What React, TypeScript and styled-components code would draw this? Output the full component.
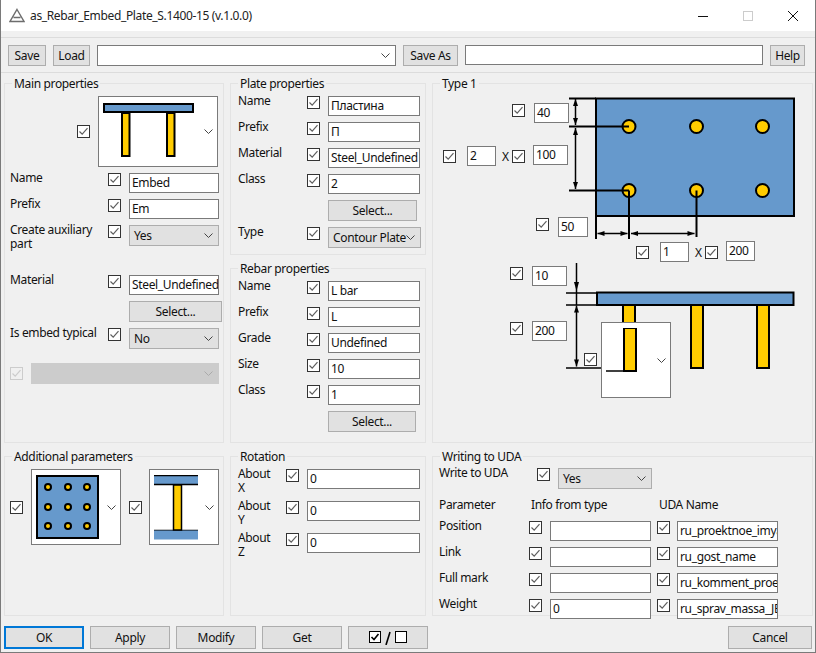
import React from 'react';
import styled, { createGlobalStyle } from 'styled-components';

const GlobalStyle = createGlobalStyle`
  html, body {
    margin: 0;
    padding: 0;
    background: #f0f0f0;
  }
  * {
    box-sizing: border-box;
  }
`;

const Win = styled.div`
  width: 816px;
  height: 653px;
  display: flex;
  flex-direction: column;
  background: #f0f0f0;
  border: 1px solid #7a7a7a;
  border-top: 0;
  font-family: 'Noto Sans', 'Open Sans', sans-serif;
  font-size: 12px;
  color: #000;
  overflow: hidden;
`;

const TitleBar = styled.div`
  height: 31px;
  flex: none;
  display: flex;
  align-items: center;
  background: #fff;
  padding-left: 8px;
`;

const TitleText = styled.span`
  margin-left: 5px;
  letter-spacing: -0.35px;
  color: #222;
`;

const TitleButtons = styled.div`
  margin-left: auto;
  display: flex;
`;

const TitleBtn = styled.div`
  width: 45px;
  height: 31px;
  display: flex;
  align-items: center;
  justify-content: center;
`;

const Toolbar = styled.div`
  height: 36px;
  margin-top: 6px;
  flex: none;
  display: flex;
  align-items: center;
  gap: 7px;
  padding: 0 9px 0 7px;
  border-top: 1px solid #dcdcdc;
  border-bottom: 1px solid #dcdcdc;
`;

const Btn = styled.button<{ $w?: number; $h?: number; $default?: boolean }>`
  width: ${(p) => (p.$w ? `${p.$w}px` : 'auto')};
  height: ${(p) => p.$h ?? 21}px;
  flex: none;
  padding: 0;
  font: inherit;
  letter-spacing: -0.35px;
  color: #111;
  background: #e1e1e1;
  border: ${(p) => (p.$default ? '2px solid #0078d7' : '1px solid #adadad')};
  display: flex;
  align-items: center;
  justify-content: center;
  gap: 5px;
`;

const Field = styled.div<{ $w?: number; $grow?: boolean }>`
  width: ${(p) => (p.$w ? `${p.$w}px` : 'auto')};
  flex: ${(p) => (p.$grow ? '1' : 'none')};
  height: 20px;
  background: #fff;
  border: 1px solid #7a7a7a;
  padding: 0 0 0 2px;
  line-height: 18px;
  letter-spacing: -0.35px;
  white-space: nowrap;
  overflow: hidden;
  color: #111;
`;

const Combo = styled.div<{ $w?: number; $grow?: boolean; $disabled?: boolean; $white?: boolean }>`
  width: ${(p) => (p.$w ? `${p.$w}px` : 'auto')};
  flex: ${(p) => (p.$grow ? '1' : 'none')};
  height: 21px;
  display: flex;
  align-items: center;
  justify-content: space-between;
  padding: 0 5px 0 4px;
  letter-spacing: -0.35px;
  color: #111;
  white-space: nowrap;
  background: ${(p) => (p.$disabled ? '#cccccc' : p.$white ? '#fff' : '#e1e1e1')};
  border: 1px solid ${(p) => (p.$disabled ? '#cccccc' : p.$white ? '#7a7a7a' : '#adadad')};
`;

const Body = styled.div`
  flex: 1;
  display: grid;
  grid-template-columns: 220px 196px 381px;
  grid-template-rows: 172px 175px 160px;
  column-gap: 6px;
  row-gap: 13px;
  padding: 10px 2px 0 3px;
`;

const Panel = styled.fieldset<{ $col: number; $row: string }>`
  grid-column: ${(p) => p.$col};
  grid-row: ${(p) => p.$row};
  position: relative;
  margin: 0;
  min-width: 0;
  padding: 0;
  border: 2px solid #e3e3e3;
  border-width: 1.5px;
`;

const Legend = styled.legend`
  margin-left: 7px;
  padding: 0 2px;
  height: 0;
  line-height: 0;
  letter-spacing: -0.35px;
  color: #111;
`;

const Stack = styled.div<{ $pad: string; $gap?: number }>`
  display: flex;
  flex-direction: column;
  gap: ${(p) => p.$gap ?? 6}px;
  padding: ${(p) => p.$pad};
`;

const Row = styled.div<{ $label?: number; $gap?: number }>`
  display: grid;
  grid-template-columns: ${(p) => p.$label ?? 90}px 13px 1fr;
  column-gap: ${(p) => p.$gap ?? 8}px;
  align-items: start;
`;

const Label = styled.span`
  line-height: 14px;
  margin-top: -2px;
  letter-spacing: -0.35px;
  color: #111;
`;

const Box = styled.span<{ $off?: boolean; $dim?: boolean }>`
  width: 13px;
  height: 13px;
  flex: none;
  display: block;
  background: ${(p) => (p.$dim ? '#f0f0f0' : '#fff')};
  border: 1px solid ${(p) => (p.$dim ? '#cccccc' : '#333')};
`;

const Tick = styled.svg`
  display: block;
  width: 11px;
  height: 11px;
`;

const Check = ({ dim }: { dim?: boolean }) => (
  <Box $dim={dim}>
    <Tick viewBox="0 0 11 11">
      <path d="M1.5 5.5 L4.2 8.2 L9.5 2.2" fill="none" stroke={dim ? '#cccccc' : '#5f5f5f'} strokeWidth="1.2" />
    </Tick>
  </Box>
);

const ChevSvg = styled.svg`
  flex: none;
  width: 9px;
  height: 5px;
`;

const Chev = ({ color = '#444' }: { color?: string }) => (
  <ChevSvg viewBox="0 0 9 5">
    <path d="M0.5 0.5 L4.5 4.5 L8.5 0.5" fill="none" stroke={color} strokeWidth="1" />
  </ChevSvg>
);

const Aligned = styled.div<{ $gap: number; $pad?: string }>`
  display: flex;
  align-items: center;
  gap: ${(p) => p.$gap}px;
  padding: ${(p) => p.$pad ?? 0};
`;

const PicCombo = styled.div<{ $w: number; $h: number }>`
  width: ${(p) => p.$w}px;
  height: ${(p) => p.$h}px;
  flex: none;
  display: flex;
  align-items: center;
  justify-content: space-between;
  padding: 0 4px 0 4px;
  background: #fff;
  border: 1px solid #7a7a7a;
`;

const EmbedThumb = () => (
  <svg width="92" height="57" viewBox="0 0 92 57">
    <rect x="1" y="1" width="89" height="8" fill="#6699cc" stroke="#000" strokeWidth="2" />
    <rect x="19" y="10" width="7.5" height="43" fill="#ffcc00" stroke="#000" strokeWidth="2" />
    <rect x="64" y="10" width="7.5" height="43" fill="#ffcc00" stroke="#000" strokeWidth="2" />
  </svg>
);

const PlateThumb = () => (
  <svg width="63" height="64" viewBox="0 0 63 64">
    <rect x="1" y="1" width="61" height="62" fill="#6699cc" stroke="#000" strokeWidth="2" />
    {[12, 32, 51].flatMap((cy) =>
      [12, 32, 51].map((cx) => (
        <circle key={`${cx}-${cy}`} cx={cx} cy={cy} r="3" fill="#ffcc00" stroke="#000" strokeWidth="2" />
      ))
    )}
  </svg>
);

const SectionThumb = () => (
  <svg width="44" height="65" viewBox="0 0 44 65">
    <rect x="0" y="0.5" width="44" height="9" fill="#6699cc" stroke="#000" strokeWidth="0" />
    <path d="M0 0.5 H44 M0 9.5 H44 M0 55.5 H44" stroke="#000" strokeWidth="1.5" />
    <rect x="0" y="55.5" width="44" height="9" fill="#6699cc" />
    <rect x="19.5" y="10" width="8" height="45" fill="#ffcc00" stroke="#000" strokeWidth="1.5" />
  </svg>
);

const Canvas = styled.div`
  position: absolute;
  left: 0;
  top: 0;
  width: 100%;
  height: 100%;
`;

const Placed = styled.div<{ $x: number; $y: number }>`
  position: absolute;
  left: ${(p) => p.$x}px;
  top: ${(p) => p.$y}px;
  display: flex;
  align-items: center;
`;

const DiagramSvg = styled.svg`
  position: absolute;
  left: 0;
  top: 0;
`;

const Times = styled.span`
  margin: 0 3px 0 6px;
  color: #111;
`;

// dimension arrow between two points on one axis
const Arrow = ({ x1, y1, x2, y2 }: { x1: number; y1: number; x2: number; y2: number }) => {
  const vertical = x1 === x2;
  const head = (x: number, y: number, dir: number) =>
    vertical
      ? `M${x - 2.5} ${y - 7 * dir} L${x} ${y} L${x + 2.5} ${y - 7 * dir} Z`
      : `M${x - 7 * dir} ${y - 2.5} L${x} ${y} L${x - 7 * dir} ${y + 2.5} Z`;
  return (
    <g>
      <line x1={x1} y1={y1} x2={x2} y2={y2} stroke="#000" strokeWidth="1.5" />
      <path d={head(x1, y1, -1)} fill="#000" />
      <path d={head(x2, y2, 1)} fill="#000" />
    </g>
  );
};

// drawn in panel coordinates: the panel's corner sits at window (431, 83)
const ox = -431;
const oy = -83;

const Diagram = () => (
  <DiagramSvg width="380" height="358" viewBox={`${-ox} ${-oy} 380 358`}>
    <rect x="594" y="97.5" width="198" height="117.5" fill="#6699cc" stroke="#000" strokeWidth="2" />
    <path
      d="M567 97.5 H594 M567 125.5 H627 M567 189.5 H627 M594 97 V238 M627 189.5 V238 M694.5 189.5 V236"
      fill="none"
      stroke="#000"
      strokeWidth="2"
    />
    {[627, 694.5, 760.5].map((cx) =>
      [125.5, 189.5].map((cy) => (
        <circle key={`${cx}-${cy}`} cx={cx} cy={cy} r="6.5" fill="#ffcc00" stroke="#000" strokeWidth="2" />
      ))
    )}
    <path d="M627 125.5 H621 M627 189.5 H621 M627 189.5 V196 M694.5 189.5 V196" stroke="#000" strokeWidth="2" />
    <Arrow x1={573.5} y1={98} x2={573.5} y2={124} />
    <Arrow x1={573.5} y1={127} x2={573.5} y2={188} />
    <Arrow x1={595.5} y1={232.5} x2={625.5} y2={232.5} />
    <Arrow x1={629} y1={232.5} x2={692.5} y2={232.5} />

    {[621, 689, 755].map((x) => (
      <rect key={x} x={x} y="304" width="12" height="63" fill="#ffcc00" stroke="#000" strokeWidth="2" />
    ))}
    <rect x="595" y="291.5" width="196.5" height="12.5" fill="#6699cc" stroke="#000" strokeWidth="2" />
    <path d="M564 292 H595 M564 304 H595 M564 367 H602" fill="none" stroke="#000" strokeWidth="1.5" />
    <Arrow x1={574.5} y1={304.5} x2={574.5} y2={365.5} />
    <line x1="574.5" y1="262" x2="574.5" y2="304" stroke="#000" strokeWidth="1.5" />
    <path d="M572 281 L574.5 290 L577 281 Z" fill="#000" />
  </DiagramSvg>
);

const Footer = styled.div`
  flex: 1;
  display: flex;
  gap: 6px;
  padding: 10px 3px 0 3px;
`;

const FootSpacer = styled.div`
  flex: 1;
`;

const MiniBox = styled.svg`
  display: block;
`;

const UdaHead = styled.div`
  display: grid;
  grid-template-columns: 92px 128px 1fr;
  line-height: 14px;
  letter-spacing: -0.35px;
  color: #111;
`;

const UdaRow = styled.div`
  display: grid;
  grid-template-columns: 90px 13px 101px 13px 101px;
  column-gap: 0;
  align-items: start;
`;

const UdaField = styled(Field)`
  margin-left: 8px;
  width: 101px;
`;

const UdaBox = styled.div`
  margin-left: 14px;
`;

const UdaGrid = styled.div`
  display: grid;
  grid-template-columns: 90px 13px 8px 101px 6px 13px 7px 101px;
  row-gap: 6px;
  align-items: start;
`;

const Minimize = () => (
  <svg width="10" height="10" viewBox="0 0 10 10"><path d="M0 5.5 H10" stroke="#111" /></svg>
);
const Maximize = () => (
  <svg width="10" height="10" viewBox="0 0 10 10"><rect x="0.5" y="0.5" width="9" height="9" fill="none" stroke="#cccccc" /></svg>
);
const Close = () => (
  <svg width="10" height="10" viewBox="0 0 10 10"><path d="M0 0 L10 10 M10 0 L0 10" stroke="#111" /></svg>
);

const AppIcon = () => (
  <svg width="16" height="15" viewBox="0 0 16 15">
    <path d="M8 1.5 L15 13.5 H1 Z M4.5 9.5 H11.5" fill="none" stroke="#6d6d6d" strokeWidth="1.4" />
  </svg>
);

const plateRows = [
  ['Name', 'Пластина'],
  ['Prefix', 'П'],
  ['Material', 'Steel_Undefined'],
  ['Class', '2'],
];

const rebarRows = [
  ['Name', 'L bar'],
  ['Prefix', 'L'],
  ['Grade', 'Undefined'],
  ['Size', '10'],
  ['Class', '1'],
];

const udaRows = [
  ['Position', '', 'ru_proektnoe_imya'],
  ['Link', '', 'ru_gost_name'],
  ['Full mark', '', 'ru_komment_proek_'],
  ['Weight', '0', 'ru_sprav_massa_JB'],
];

export default function App() {
  return (
    <>
      <GlobalStyle />
      <Win>
        <TitleBar>
          <AppIcon />
          <TitleText>as_Rebar_Embed_Plate_S.1400-15 (v.1.0.0)</TitleText>
          <TitleButtons>
            <TitleBtn><Minimize /></TitleBtn>
            <TitleBtn><Maximize /></TitleBtn>
            <TitleBtn><Close /></TitleBtn>
          </TitleButtons>
        </TitleBar>

        <Toolbar>
          <Btn $w={38}>Save</Btn>
          <Btn $w={37}>Load</Btn>
          <Combo $w={299} $white><span /><Chev /></Combo>
          <Btn $w={55}>Save As</Btn>
          <Field $w={298} />
          <Btn $w={35}>Help</Btn>
        </Toolbar>

        <Body>
          <Panel $col={1} $row="1 / span 2">
            <Legend>Main properties</Legend>
            <Stack $pad="12px 4px 0 5px">
              <Aligned $gap={8} $pad="0 0 0 67px">
                <Check />
                <PicCombo $w={120} $h={71}>
                  <EmbedThumb />
                  <Chev />
                </PicCombo>
              </Aligned>
              <Row>
                <Label>Name</Label>
                <Check />
                <Field>Embed</Field>
              </Row>
              <Row>
                <Label>Prefix</Label>
                <Check />
                <Field>Em</Field>
              </Row>
              <Row>
                <Label>Create auxiliary part</Label>
                <Check />
                <Combo>Yes<Chev /></Combo>
              </Row>
              <Row style={{ marginTop: 18 }}>
                <Label>Material</Label>
                <Check />
                <Field>Steel_Undefined</Field>
              </Row>
              <Row>
                <span />
                <span />
                <Btn $w={93}>Select...</Btn>
              </Row>
              <Row>
                <Label>Is embed typical</Label>
                <Check />
                <Combo>No<Chev /></Combo>
              </Row>
              <Aligned $gap={8} $pad="8px 0 0 0">
                <Check dim />
                <Combo $grow $disabled><span /><Chev color="#aaa" /></Combo>
              </Aligned>
            </Stack>
          </Panel>

          <Panel $col={2} $row="1">
            <Legend>Plate properties</Legend>
            <Stack $pad="12px 5px 0 7px">
              {plateRows.map(([l, v]) => (
                <Row key={l} $label={61}>
                  <Label>{l}</Label>
                  <Check />
                  <Field>{v}</Field>
                </Row>
              ))}
              <Row $label={61}>
                <span />
                <span />
                <Btn $w={89}>Select...</Btn>
              </Row>
              <Row $label={61}>
                <Label>Type</Label>
                <Check />
                <Combo>Contour Plate<Chev /></Combo>
              </Row>
            </Stack>
          </Panel>

          <Panel $col={2} $row="2">
            <Legend>Rebar properties</Legend>
            <Stack $pad="12px 5px 0 7px">
              {rebarRows.map(([l, v]) => (
                <Row key={l} $label={61}>
                  <Label>{l}</Label>
                  <Check />
                  <Field>{v}</Field>
                </Row>
              ))}
              <Row $label={61}>
                <span />
                <span />
                <Btn $w={88}>Select...</Btn>
              </Row>
            </Stack>
          </Panel>

          <Panel $col={3} $row="1 / span 2">
            <Legend>Type 1</Legend>
            <Canvas>
              <Diagram />
              <Placed $x={79} $y={20}><Check /></Placed>
              <Placed $x={101} $y={19}><Field $w={35}>40</Field></Placed>
              <Placed $x={10} $y={62}><Check /><Times style={{ marginLeft: 8 }} /><Field $w={29}>2</Field><Times>X</Times><Check /></Placed>
              <Placed $x={100} $y={61}><Field $w={35}>100</Field></Placed>
              <Placed $x={103} $y={134}><Check /></Placed>
              <Placed $x={125} $y={133}><Field $w={30}>50</Field></Placed>
              <Placed $x={203} $y={158}><Check /><Times style={{ marginLeft: 8 }} /><Field $w={29}>1</Field><Times>X</Times><Check /></Placed>
              <Placed $x={293} $y={157}><Field $w={29}>200</Field></Placed>
              <Placed $x={77} $y={183}><Check /></Placed>
              <Placed $x={99} $y={182}><Field $w={35}>10</Field></Placed>
              <Placed $x={77} $y={238}><Check /></Placed>
              <Placed $x={99} $y={237}><Field $w={35}>200</Field></Placed>
              <Placed $x={151} $y={269}><Check /></Placed>
              <Placed $x={168} $y={238}>
                <PicCombo $w={70} $h={76}>
                  <svg width="32" height="46" viewBox="0 0 32 46" style={{ marginTop: -18 }}>
                    <rect x="18" y="0" width="12" height="43" fill="#ffcc00" stroke="#000" strokeWidth="2" strokeDasharray="0" />
                    <path d="M0 43 H30" stroke="#000" strokeWidth="1.5" />
                  </svg>
                  <Chev />
                </PicCombo>
              </Placed>
            </Canvas>
          </Panel>

          <Panel $col={1} $row="3">
            <Legend>Additional parameters</Legend>
            <Aligned $gap={8} $pad="12px 4px 0 5px">
              <Check />
              <PicCombo $w={90} $h={76}>
                <PlateThumb />
                <Chev />
              </PicCombo>
              <Aligned $gap={7}>
                <Check />
                <PicCombo $w={70} $h={76}>
                  <SectionThumb />
                  <Chev />
                </PicCombo>
              </Aligned>
            </Aligned>
          </Panel>

          <Panel $col={2} $row="3">
            <Legend>Rotation</Legend>
            <Stack $pad="12px 5px 0 7px">
              {['About X', 'About Y', 'About Z'].map((l) => (
                <Row key={l} $label={40}>
                  <Label>{l}</Label>
                  <Check />
                  <Field>0</Field>
                </Row>
              ))}
            </Stack>
          </Panel>

          <Panel $col={3} $row="3">
            <Legend>Writing to UDA</Legend>
            <Stack $pad="11px 0 0 6px" $gap={9}>
              <Row $label={90}>
                <Label>Write to UDA</Label>
                <Check />
                <Combo $w={94}>Yes<Chev /></Combo>
              </Row>
              <UdaHead>
                <span>Parameter</span>
                <span>Info from type</span>
                <span>UDA Name</span>
              </UdaHead>
              <UdaGrid>
                {udaRows.map(([l, info, name]) => (
                  <React.Fragment key={l}>
                    <Label>{l}</Label>
                    <Check />
                    <span />
                    <Field>{info}</Field>
                    <span />
                    <Check />
                    <span />
                    <Field>{name}</Field>
                  </React.Fragment>
                ))}
              </UdaGrid>
            </Stack>
          </Panel>
        </Body>

        <Footer>
          <Btn $w={80} $h={23} $default>OK</Btn>
          <Btn $w={80} $h={23}>Apply</Btn>
          <Btn $w={80} $h={23}>Modify</Btn>
          <Btn $w={80} $h={23}>Get</Btn>
          <Btn $w={80} $h={23}>
            <MiniBox width="38" height="14" viewBox="0 0 38 14">
              <rect x="0.5" y="0.5" width="11" height="11" fill="#fff" stroke="#000" />
              <path d="M2.5 6 L5 8.5 L9.5 3" fill="none" stroke="#000" strokeWidth="1.6" />
              <path d="M21 1 L17 14" stroke="#000" strokeWidth="1.6" />
              <rect x="26.5" y="0.5" width="11" height="11" fill="#fff" stroke="#000" />
            </MiniBox>
          </Btn>
          <FootSpacer />
          <Btn $w={84} $h={23}>Cancel</Btn>
        </Footer>
      </Win>
    </>
  );
}
